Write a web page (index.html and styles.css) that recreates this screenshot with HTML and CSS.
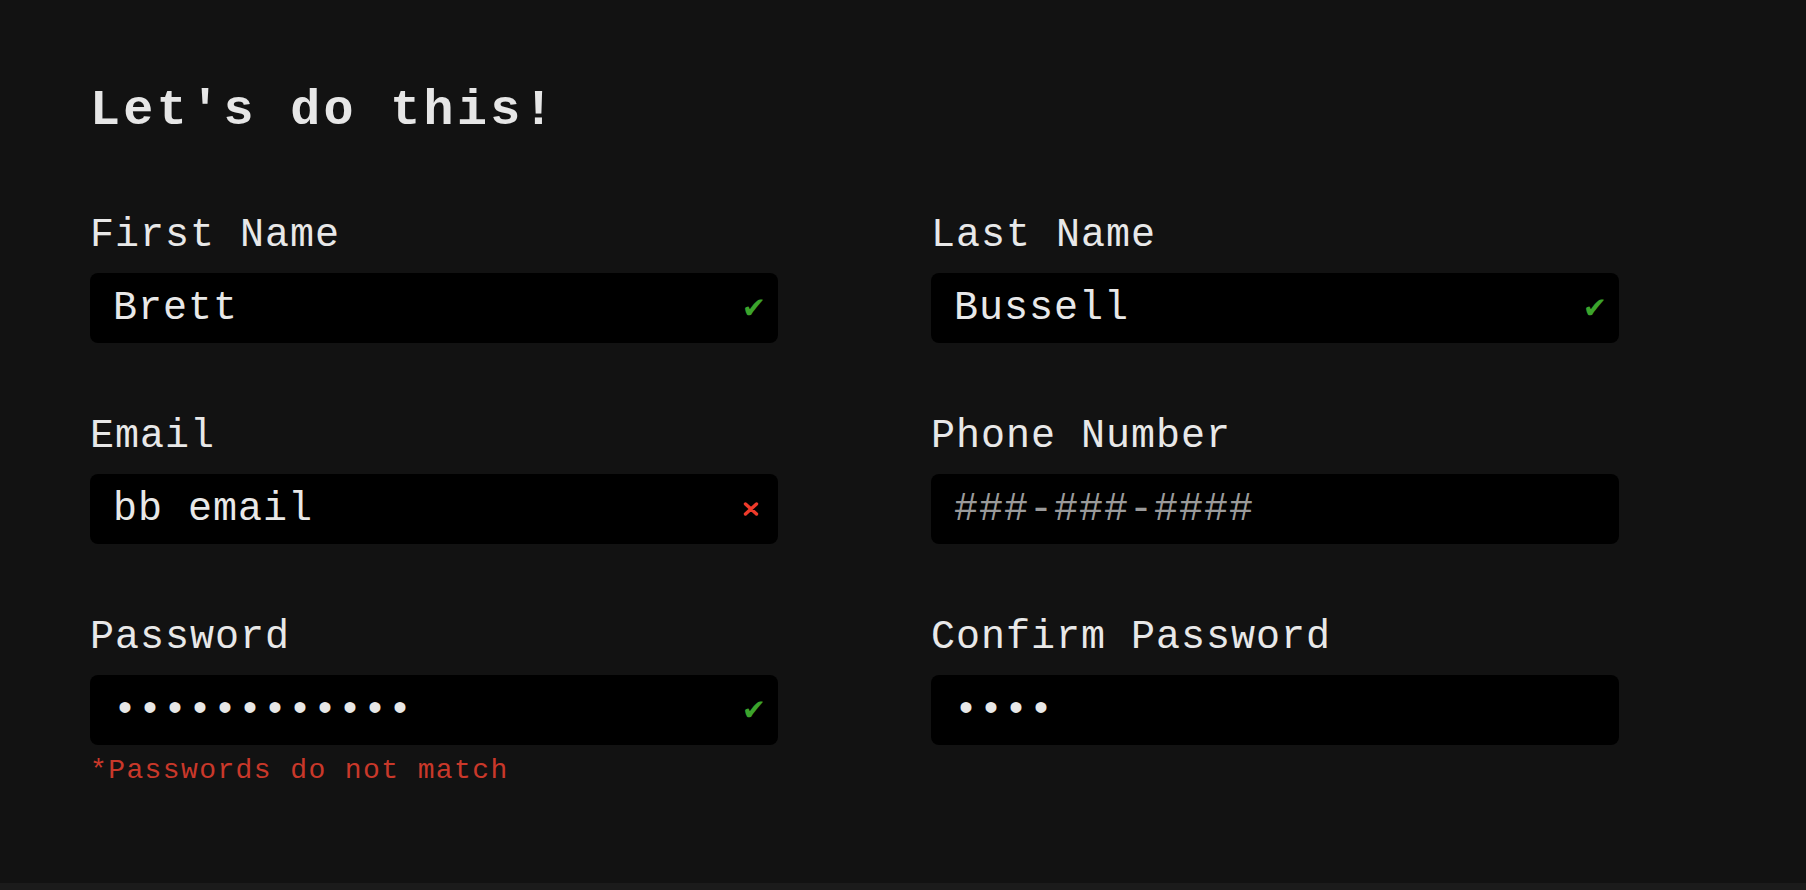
FILE: index.html
```html
<!DOCTYPE html>
<html lang="en">
<head>
<meta charset="utf-8">
<title>Sign up</title>
<link rel="stylesheet" href="styles.css">
</head>
<body>
<main class="page">
  <h1 class="title">Let's do this!</h1>
  <form class="form">
    <div class="field">
      <label class="label" for="fn">First Name</label>
      <div class="control">
        <input class="input" id="fn" type="text" value="Brett" readonly>
        <span class="status ok">✔</span>
      </div>
    </div>
    <div class="field">
      <label class="label" for="ln">Last Name</label>
      <div class="control">
        <input class="input" id="ln" type="text" value="Bussell" readonly>
        <span class="status ok">✔</span>
      </div>
    </div>
    <div class="field">
      <label class="label" for="em">Email</label>
      <div class="control">
        <input class="input" id="em" type="text" value="bb email" readonly>
        <svg class="status bad" viewBox="0 0 16 14" width="16" height="14"><path d="M2.5 2 L13.5 12 M13.5 2 L2.5 12" stroke="currentColor" stroke-width="3.4" stroke-linecap="round" fill="none"/></svg>
      </div>
    </div>
    <div class="field">
      <label class="label" for="ph">Phone Number</label>
      <div class="control">
        <input class="input" id="ph" type="text" placeholder="###-###-####" readonly>
      </div>
    </div>
    <div class="field">
      <label class="label" for="pw">Password</label>
      <div class="control">
        <input class="input" id="pw" type="text" value="••••••••••••" readonly>
        <span class="status ok">✔</span>
      </div>
      <p class="error">*Passwords do not match</p>
    </div>
    <div class="field">
      <label class="label" for="cp">Confirm Password</label>
      <div class="control">
        <input class="input" id="cp" type="text" value="••••" readonly>
      </div>
    </div>
  </form>
</main>
<div class="strip"></div>
</body>
</html>
```

FILE: styles.css
```css
html, body {
  margin: 0;
  padding: 0;
  height: 100%;
}

body {
  background: #121212;
  color: #e8e8e8;
  font-family: "Liberation Mono", "DejaVu Sans Mono", monospace;
  display: flex;
  flex-direction: column;
  overflow: hidden;
}

.page {
  flex: 1;
  padding: 83px 90px 0 90px;
}

.title {
  margin: 0;
  font-size: 50px;
  line-height: 56px;
  font-weight: 700;
  letter-spacing: 3.35px;
  color: #e6e6e6;
}

.form {
  margin-top: 77px;
  display: grid;
  grid-template-columns: 688px 688px;
  column-gap: 153px;
  row-gap: 74px;
  align-items: start;
}

.field {
  display: flex;
  flex-direction: column;
}

.label {
  display: block;
  font-size: 40px;
  line-height: 40px;
  letter-spacing: 1px;
  color: #e8e8e8;
}

.control {
  position: relative;
  margin-top: 17px;
  height: 70px;
  background: #000;
  border-radius: 8px;
}

.input {
  box-sizing: border-box;
  width: 100%;
  height: 70px;
  padding: 0 50px 0 23px;
  border: 0;
  outline: none;
  background: transparent;
  color: #e8e8e8;
  font-family: "Liberation Mono", "DejaVu Sans Mono", monospace;
  font-size: 40px;
  letter-spacing: 1px;
}

.input::placeholder {
  color: #9a9a9a;
  opacity: 1;
}

.status {
  position: absolute;
  top: 50%;
  transform: translateY(-50%);
  right: 14px;
}

.status.ok {
  color: #3ca42c;
  font-family: "DejaVu Sans", sans-serif;
  font-size: 29px;
  line-height: 1;
  right: 12px;
}

.status.bad {
  color: #ee3a2a;
  right: 19px;
}

.error {
  margin: 12px 0 0 0;
  font-size: 28px;
  line-height: 28px;
  letter-spacing: 1.4px;
  color: #c9382a;
}

.strip {
  height: 7px;
  background: #1b1b1b;
  flex: none;
}
```
